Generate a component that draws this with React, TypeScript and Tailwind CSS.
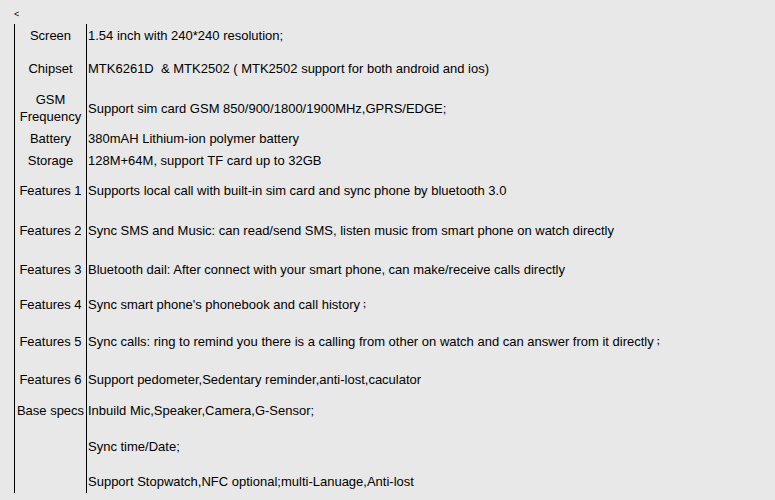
const rows: { label: string; text: string; h: number; semi?: boolean }[] = [
  { label: 'Screen', text: '1.54 inch with 240*240 resolution;', h: 22 },
  { label: 'Chipset', text: 'MTK6261D\u00a0 & MTK2502 ( MTK2502 support for both android and ios)', h: 44 },
  { label: 'GSM Frequency', text: 'Support sim card GSM 850/900/1800/1900MHz,GPRS/EDGE;', h: 36 },
  { label: 'Battery', text: '380mAH Lithium-ion polymer battery', h: 24 },
  { label: 'Storage', text: '128M+64M, support TF card up to 32GB', h: 20 },
  { label: 'Features 1', text: 'Supports local call with built-in sim card and sync phone by bluetooth 3.0', h: 40 },
  { label: 'Features 2', text: 'Sync SMS and Music: can read/send SMS, listen music from smart phone on watch directly', h: 40 },
  { label: 'Features 3', text: 'Bluetooth dail: After connect with your smart phone, can make/receive calls directly', h: 38 },
  { label: 'Features 4', text: "Sync smart phone's phonebook and call history", h: 32, semi: true },
  { label: 'Features 5', text: 'Sync calls: ring to remind you there is a calling from other on watch and can answer from it directly', h: 42, semi: true },
  { label: 'Features 6', text: 'Support pedometer,Sedentary reminder,anti-lost,caculator', h: 34 },
  { label: 'Base specs', text: 'Inbuild Mic,Speaker,Camera,G-Sensor;', h: 28 },
  { label: '', text: 'Sync time/Date;', h: 45 },
  { label: '', text: 'Support Stopwatch,NFC optional;multi-Lanuage,Anti-lost', h: 24 },
];

export default function App() {
  return (
    <div
      className="w-[775px] h-[500px] bg-[#e8e8e8] text-black text-[13px] leading-[17px] overflow-hidden"
      style={{ fontFamily: '"Liberation Sans", Arial, sans-serif' }}
    >
      <div className="h-[24px] pl-[14px] pt-[9px] text-[9px] leading-[10px]">&lt;</div>
      <div className="ml-[14px] flex flex-col border-l border-black w-fit">
        {rows.map((r, i) => (
          <div key={i} className="flex" style={{ height: r.h }}>
            <div className="w-[72px] border-r border-black flex items-center justify-center text-center">
              {r.label}
            </div>
            <div className="pl-[1px] flex items-center whitespace-nowrap pr-4">
              {r.text}
              {r.semi && <span className="ml-[3px] text-[9px] font-bold leading-none">;</span>}
            </div>
          </div>
        ))}
      </div>
    </div>
  );
}
